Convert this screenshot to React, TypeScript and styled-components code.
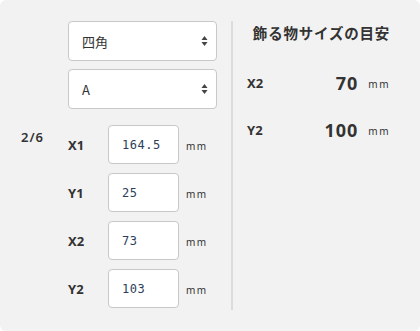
import styled, { createGlobalStyle } from "styled-components";

const GlobalStyle = createGlobalStyle`
  html, body {
    margin: 0;
    padding: 0;
    background: #ffffff;
  }
  body {
    font-family: "Noto Sans", "Noto Sans CJK JP", sans-serif;
    color: #333;
  }
`;

const Panel = styled.div`
  box-sizing: border-box;
  width: 420px;
  height: 331px;
  background: #f2f2f2;
  border-radius: 6px;
  display: flex;
  padding-top: 21px;
`;

const PageLabel = styled.div`
  width: 47px;
  padding-left: 21px;
  padding-top: 107px;
  font-size: 13px;
  font-weight: 600;
  letter-spacing: 1px;
  color: #333;
`;

const Form = styled.div`
  width: 149px;
  display: flex;
  flex-direction: column;
  gap: 8px;
`;

const Select = styled.div`
  box-sizing: border-box;
  height: 40px;
  background: #fff;
  border: 1px solid #c8c8c8;
  border-radius: 4px;
  display: flex;
  align-items: center;
  justify-content: space-between;
  padding: 0 8px 0 13px;
  font-family: "Noto Sans CJK JP", sans-serif;
  font-size: 13px;
  color: #333;
`;

const Rows = styled.div`
  margin-top: 8px;
  display: flex;
  flex-direction: column;
  gap: 9px;
`;

const Row = styled.div`
  display: flex;
  align-items: center;
`;

const AxisLabel = styled.div<{ $width?: number }>`
  width: ${({ $width }) => $width ?? 40}px;
  font-size: 13px;
  font-weight: 700;
  color: #333;
`;

const NumberBox = styled.div`
  box-sizing: border-box;
  width: 71px;
  height: 39px;
  background: #fff;
  border: 1px solid #c8c8c8;
  border-radius: 4px;
  display: flex;
  align-items: center;
  padding-left: 13px;
  font-family: "DejaVu Sans Mono", monospace;
  font-size: 12px;
  letter-spacing: 0.5px;
  color: #2c3e5a;
`;

const Unit = styled.span`
  margin-left: 7px;
  margin-top: 3px;
  font-size: 10px;
  letter-spacing: 1.5px;
  color: #333;
`;

const Divider = styled.div`
  margin-left: 14px;
  width: 2px;
  height: 289px;
  background: #dcdcdc;
`;

const Guide = styled.div`
  flex: 1;
  padding: 0 24px 0 14px;
`;

const GuideTitle = styled.div`
  text-align: center;
  font-family: "Noto Sans CJK JP", sans-serif;
  font-size: 14.5px;
  font-weight: 700;
  letter-spacing: 0.8px;
  line-height: 24px;
  color: #333;
`;

const GuideRow = styled.div<{ $top: number }>`
  display: flex;
  align-items: center;
  margin-top: ${({ $top }) => $top}px;
  height: 24px;
`;

const GuideValue = styled.div`
  flex: 1;
  text-align: right;
  font-size: 18px;
  font-weight: 700;
  letter-spacing: 1px;
  color: #333;
`;

const GuideUnit = styled(Unit)`
  margin-left: 10px;
  margin-right: 6px;
  margin-top: 2px;
`;

const Arrows = () => (
  <svg width="7" height="12" viewBox="0 0 7 12">
    <path d="M3.5 1 L6.5 5 L0.5 5 Z" fill="#444" />
    <path d="M3.5 11 L6.5 7 L0.5 7 Z" fill="#444" />
  </svg>
);

const sizes = [
  { label: "X1", value: "164.5" },
  { label: "Y1", value: "25" },
  { label: "X2", value: "73" },
  { label: "Y2", value: "103" },
];

export default function App() {
  return (
    <>
      <GlobalStyle />
      <Panel>
        <PageLabel>2/6</PageLabel>
        <Form>
          <Select>
            <span>四角</span>
            <Arrows />
          </Select>
          <Select>
            <span>A</span>
            <Arrows />
          </Select>
          <Rows>
            {sizes.map((s) => (
              <Row key={s.label}>
                <AxisLabel>{s.label}</AxisLabel>
                <NumberBox>{s.value}</NumberBox>
                <Unit>mm</Unit>
              </Row>
            ))}
          </Rows>
        </Form>
        <Divider />
        <Guide>
          <GuideTitle>飾る物サイズの目安</GuideTitle>
          <GuideRow $top={26}>
            <AxisLabel $width={30}>X2</AxisLabel>
            <GuideValue>70</GuideValue>
            <GuideUnit>mm</GuideUnit>
          </GuideRow>
          <GuideRow $top={23}>
            <AxisLabel $width={30}>Y2</AxisLabel>
            <GuideValue>100</GuideValue>
            <GuideUnit>mm</GuideUnit>
          </GuideRow>
        </Guide>
      </Panel>
    </>
  );
}
